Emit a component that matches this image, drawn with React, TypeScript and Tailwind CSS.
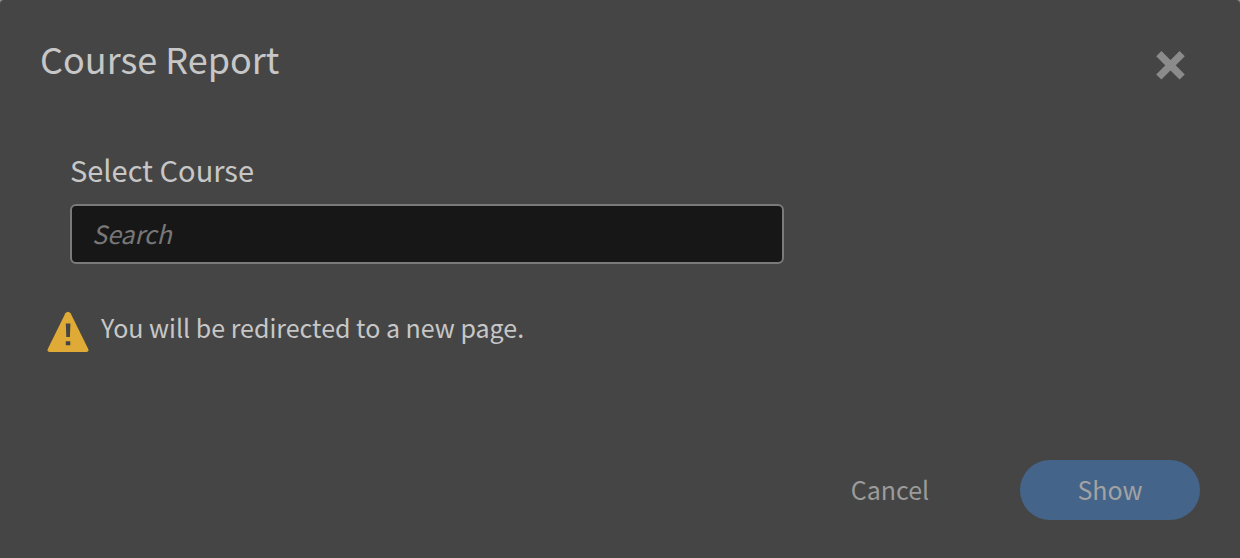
export default function App() {
  return (
    <div className="min-h-screen bg-[#939393] font-['Noto_Sans_CJK_SC','Noto_Sans',sans-serif] text-[#c7c7c7]">
      <section
        role="dialog"
        aria-labelledby="dialog-title"
        className="flex min-h-screen flex-col rounded-t bg-[#454545] px-10 pt-[34px] pb-[38px]"
      >
        <header className="flex items-start justify-between pr-[13px]">
          <h1 id="dialog-title" className="text-[36px] leading-[48px]">
            Course Report
          </h1>
          <button type="button" aria-label="Close" className="mt-[15px] text-[#8b8b8b]">
            <svg viewBox="0 0 32 32" className="size-[32px]" aria-hidden="true">
              <path d="M3.8 4.6 27.2 28M27.2 4.6 3.8 28" fill="none" stroke="currentColor" strokeWidth="7.4" />
            </svg>
          </button>
        </header>

        <div className="mt-[67px] w-full max-w-[774px] px-[30px]">
          <label htmlFor="course" className="block text-[29px] leading-[40px]">
            Select Course
          </label>
          <input
            id="course"
            type="text"
            placeholder="Search"
            className="mt-[15px] block h-[60px] w-full rounded-md border-2 border-[#7a7a7a] bg-[#171717] px-5 pb-[2px] text-[25px] outline-none placeholder:text-[#777777] placeholder:italic"
          />
        </div>

        <div className="mt-[45px] flex items-start gap-3 pl-[7px]">
          <svg viewBox="0 0 42 42" className="mt-[2px] size-[42px]" aria-hidden="true">
            <path
              d="M18.4 2.2Q21 -0.8 23.6 2.2L41 37.5Q42.4 41 39.4 41H2.6Q-0.4 41 1 37.5Z"
              fill="#dfaa36"
            />
            <path d="M18.8 12.5H23.4L22.9 26H19.3ZM18.8 30.3H23.3V34.3H18.8Z" fill="#454545" />
          </svg>
          <p className="text-[25px] leading-[36px]">You will be redirected to a new page.</p>
        </div>

        <footer className="mt-auto flex justify-end gap-10 text-[25px] leading-[36px] text-[#9b9b9b]">
          <button type="button" className="h-[60px] w-[180px] rounded-full pb-[2px]">
            Cancel
          </button>
          <button type="button" className="h-[60px] w-[180px] rounded-full bg-[#45648a] pb-[2px] text-[#a2a2a2]">
            Show
          </button>
        </footer>
      </section>
    </div>
  );
}
